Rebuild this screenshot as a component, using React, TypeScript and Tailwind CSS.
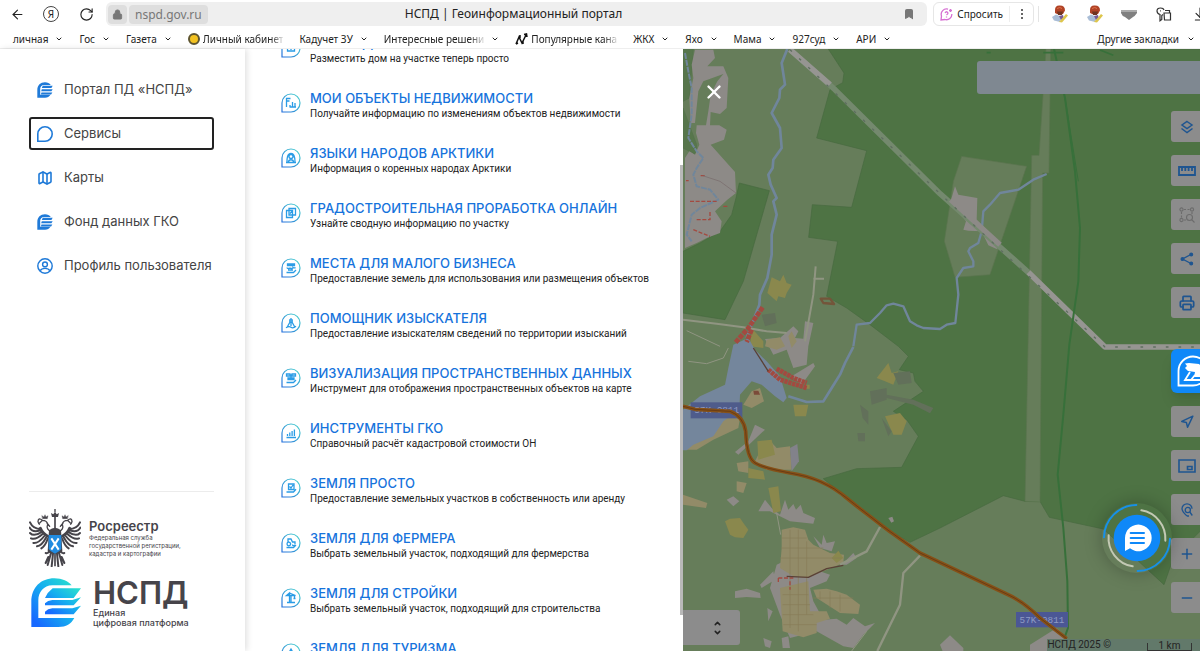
import React from 'react';
import { ArrowLeft, ArrowDownToLine, Bookmark, ChevronDown, ChevronUp, Lock, Map, Minus, Navigation, Plus, Printer, RotateCw, X } from 'lucide-react';

const DROP = 'M1 19V10A9 9 0 1 1 10 19Z';

const folders = [
    { label: 'личная' },
    { label: 'Гос' },
    { label: 'Газета' },
    { label: 'Личный кабинет', icon: 'coin', fade: true },
    { label: 'Кадучет ЗУ' },
    { label: 'Интересные решени', fade: true },
    { label: 'Популярные кана', icon: 'zigzag', fade: true },
    { label: 'ЖКХ' },
    { label: 'Яхо' },
    { label: 'Мама' },
    { label: '927суд' },
    { label: 'АРИ' },
];

const services = [
    { title: 'ЖИЛЬЁ ДЛЯ РОССИЯН', text: 'Разместить дом на участке теперь просто', icon: 'M6.500 7h7v6h-7zM8 10h4M10 8v4' },
    { title: 'МОИ ОБЪЕКТЫ НЕДВИЖИМОСТИ', text: 'Получайте информацию по изменениям объектов недвижимости', icon: 'M5.500 14V5.500h4M5.500 8h3M9 14v-2M11.500 14v-5M14 14v-4M8.500 14H15' },
    { title: 'ЯЗЫКИ НАРОДОВ АРКТИКИ', text: 'Информация о коренных народах Арктики', icon: 'M6 14c0-3 0-8.500 4-8.500s4 5.500 4 8.500M5 14.500h10M8 8.500a2 2 0 1 0 4 0a2 2 0 1 0-4 0M7.500 14c0-3 5-3 5 0' },
    { title: 'ГРАДОСТРОИТЕЛЬНАЯ ПРОРАБОТКА ОНЛАЙН', text: 'Узнайте сводную информацию по участку', icon: 'M5.500 7.500h6v7h-6zM8 5.500h6.500v6.500H8zM9 10.500l3-3' },
    { title: 'МЕСТА ДЛЯ МАЛОГО БИЗНЕСА', text: 'Предоставление земель для использования или размещения объектов', icon: 'M6.500 6h7v1.500h-7zM6 9.500a1.500 1 0 0 0 3 0a1.500 1 0 0 0 3 0a1.500 1 0 0 0 2.500 0M7 12h5M5.500 14.500h7l2.500-2.500' },
    { title: 'ПОМОЩНИК ИЗЫСКАТЕЛЯ', text: 'Предоставление изыскателям сведений по территории изысканий', icon: 'M10 5v2M8.800 7h2.400v2H8.800zM9 9l-2.500 4.500M10 9v4M11 9l2.500 4.500M5 14.800q3-2 5-.5t5-1' },
    { title: 'ВИЗУАЛИЗАЦИЯ ПРОСТРАНСТВЕННЫХ ДАННЫХ', text: 'Инструмент для отображения пространственных объектов на карте', icon: 'M5.500 6h3.500v2h-3.500zM11 6h3.500v2H11zM7 10h6v1.500H7zM9 7h2M10 7v3M5.500 14.500h7l2.500-2.500' },
    { title: 'ИНСТРУМЕНТЫ ГКО', text: 'Справочный расчёт кадастровой стоимости ОН', icon: 'M6.500 13v-2M8.800 13V9.500M11.100 13V8M13.400 13V6.500M5.500 14.500H15' },
    { title: 'ЗЕМЛЯ ПРОСТО', text: 'Предоставление земельных участков в собственность или аренду', icon: 'M7.500 6h5.500v5.500H7.500zM8.500 8.500l1.500 1.500l2-3M5.500 14h7l2.500-2.800' },
    { title: 'ЗЕМЛЯ ДЛЯ ФЕРМЕРА', text: 'Выбрать земельный участок, подходящий для фермерства', icon: 'M7 9V6h3l1.500 3h2.500v2M6 11a1.800 1.800 0 1 0 3.600 0a1.800 1.800 0 1 0-3.600 0M11.500 11.500a1.200 1.200 0 1 0 2.400 0M5.500 14.500h7l2.500-2.500' },
    { title: 'ЗЕМЛЯ ДЛЯ СТРОЙКИ', text: 'Выбрать земельный участок, подходящий для строительства', icon: 'M8.500 14V5l-3 2.500h9L8.500 5M10 7.500V14M13.500 8v2M12.500 10.500h2M6 14.500h8' },
    { title: 'ЗЕМЛЯ ДЛЯ ТУРИЗМА', text: 'Выбрать земельный участок, подходящий для туризма', icon: 'M5.500 14l4.500-8l4.500 8z' },
];

const NspdIcon = () => (
    <svg viewBox="0 0 100 100" className="h-4 w-4" fill="#1f7ad8">
        <path d="M2 98V50C2 20 22 2 50 2C66 2 78 8 86 18H44C28 18 20 30 20 42V80H84C76 92 66 98 50 98Z" />
        <path d="M36 24H98L90 37H30ZM30 46H98L90 58H26ZM28 66H96L88 78H24Z" />
    </svg>
);

const navItems = [
    { label: 'Портал ПД «НСПД»', icon: <NspdIcon /> },
    { label: 'Сервисы', active: true, icon: <svg viewBox="0 0 20 20" className="h-4 w-4" fill="none" stroke="#1f7ad8" strokeWidth="2"><path d={DROP} /></svg> },
    { label: 'Карты', icon: <Map className="h-4 w-4 text-[#1f7ad8]" strokeWidth={2.4} /> },
    { label: 'Фонд данных ГКО', icon: <NspdIcon /> },
    {
        label: 'Профиль пользователя',
        icon: (
            <svg viewBox="0 0 20 20" className="h-4 w-4" fill="none" stroke="#1f7ad8" strokeWidth="1.800">
                <circle cx="10" cy="10" r="9" />
                <circle cx="10" cy="8" r="3" />
                <path d="M4 16c2-4 10-4 12 0" />
            </svg>
        ),
    },
];

const ServiceIcon = ({ path }: { path: string }) => (
    <svg viewBox="0 0 20 20" className="mt-[3px] h-5 w-5 shrink-0" fill="none" stroke="url(#drop)">
        <path d={DROP} strokeWidth="1.200" />
        <path d={path} strokeWidth="1.300" stroke="#2a9ce6" />
    </svg>
);

const Gnome = () => (
    <svg viewBox="0 0 18 18" className="h-[18px] w-[18px]">
        <path d="M4 5q0-5 5-4.500q5 0 5 5l-2 3.500H6l-2-1z" fill="#b04326" />
        <path d="M6 3.500q3-2 5 0" stroke="#e3714a" fill="none" />
        <path d="M6 6.500h6l-1 3.500H7z" fill="#6e3420" />
        <path d="M1 12l4-2.500l6 2.500l-2 5l-6-1.500z" fill="#a9bdd6" />
        <path d="M8 11l4-1l1 4l-3 1z" fill="#775a96" />
        <path d="M8 17l7-8l2 1.500l-6 7z" fill="#ddc54c" />
    </svg>
);

const BrowserBar = () => (
    <header className="shrink-0 bg-white font-['Noto_Sans',sans-serif] text-[#222]">
        <div className="flex h-7 items-center">
            <button aria-label="Назад" className="ml-[10px]"><ArrowLeft className="h-[15px] w-[15px]" strokeWidth={1.8} /></button>
            <button aria-label="Яндекс" className="ml-[18px] flex h-4 w-4 items-center justify-center rounded-full border border-[#444] text-[10px] leading-none">Я</button>
            <button aria-label="Обновить" className="ml-5"><RotateCw className="h-[15px] w-[15px]" strokeWidth={1.8} /></button>
            <div className="ml-3 flex h-6 flex-1 items-center rounded-md bg-[#efefef] px-[2px]">
                <button aria-label="Защищено" className="flex h-[19px] w-[19px] items-center justify-center rounded bg-[#dedede] text-[#777]"><Lock className="h-[11px] w-[11px] fill-[#777]" /></button>
                <span className="ml-[2px] rounded bg-[#dedede] px-[6px] text-[12px] leading-[19px] text-[#777]">nspd.gov.ru</span>
                <span className="flex-1 truncate pr-[84px] text-center text-[12px] leading-5">НСПД | Геоинформационный портал</span>
                <button aria-label="Добавить в закладки" className="mr-[10px]"><Bookmark className="h-3 w-3 fill-[#777] text-[#777]" /></button>
            </div>
            <div className="ml-[6px] flex h-6 items-center rounded-md border border-[#e6e6e6] pl-[6px] text-[10px]">
                <button className="flex items-center gap-1">
                    <svg viewBox="0 0 13 13" className="h-[13px] w-[13px]" fill="none" stroke="#d66fd2" strokeWidth="1.300">
                        <path d="M8 1.200A5.300 5.300 0 0 0 1.500 8L1 12l4-.5A5.300 5.300 0 0 0 11.800 6" />
                        <path d="M5 5q1.500-2.500 3 0q0 1-1.500 2M6.500 8.500v1M10.500 1v3M9 2.500h3" />
                    </svg>
                    Спросить
                </button>
                <button aria-label="Меню" className="ml-[6px] flex h-4 w-6 items-center justify-center border-l border-[#eee]">
                    <svg viewBox="0 0 4 14" className="h-[14px] w-1" fill="#333"><circle cx="2" cy="3" r="1" /><circle cx="2" cy="7" r="1" /><circle cx="2" cy="11" r="1" /></svg>
                </button>
            </div>
            <span className="ml-1 h-4 w-px bg-[#e4e4e4]" />
            <button aria-label="Расширение" className="ml-3"><Gnome /></button>
            <button aria-label="Расширение 2" className="ml-[17px]"><Gnome /></button>
            <button aria-label="Карман" className="ml-[17px]">
                <svg viewBox="0 0 16 12" className="h-3 w-4"><path d="M0 2h16v3q-2 3-4 4l-4 3l-4-3q-3-1-4-4z" fill="#808080" /><path d="M0 2h16v2H0z" fill="#aaa" /></svg>
            </button>
            <button aria-label="Пароли" className="ml-[19px]">
                <svg viewBox="0 0 16 15" className="h-[15px] w-4" fill="none" stroke="#333" strokeWidth="1.200">
                    <path d="M7 7.500L5.800 8.500V12.500L4 13.800V7.500Q1 6.500 1 4Q1 1 4.500 1Q7.500 1 8 3" />
                    <path d="M8 6H14.500V13H8.500ZM9 3.500H13.500V6M4.200 3.800h.8" />
                </svg>
            </button>
            <button aria-label="Загрузки" className="-mr-2 ml-5"><ArrowDownToLine className="h-4 w-4" strokeWidth={1.6} /></button>
        </div>
        <nav className="flex h-[21px] items-center border-b border-[#eee] pl-[13px] pr-[5px] pt-[2px] text-[10px] leading-[14px]">
            <ul className="flex flex-1 items-center gap-4">
                {folders.map((f) => (
                    <li key={f.label}>
                        <a href="#" className="flex items-center">
                            {f.icon === 'coin' && <span className="mr-[3px] h-3 w-3 rounded-full border-2 border-[#5e5530] bg-[#f3c221]" />}
                            {f.icon === 'zigzag' && (
                                <svg viewBox="0 0 13 13" className="mr-[3px] h-[13px] w-[13px]" fill="none" stroke="#111" strokeWidth="1.500">
                                    <path d="M1 11l3-7l3 6l4-8M1 11l2-1M5 2v3M9 1.500l2.500-.5l.5 3M8 8v3" />
                                </svg>
                            )}
                            <span className={`whitespace-nowrap ${f.fade ? '[mask-image:linear-gradient(to_right,black_85%,rgba(0,0,0,0.150))]' : ''}`}>{f.label}</span>
                            {f.icon ? null : <ChevronDown className="ml-[7px] h-2 w-2" strokeWidth={3} />}
                        </a>
                    </li>
                ))}
            </ul>
            <a href="#" className="flex items-center whitespace-nowrap">Другие закладки<ChevronDown className="ml-2 h-2 w-2" strokeWidth={3} /></a>
        </nav>
    </header>
);

const Emblem = () => (
    <svg viewBox="0 0 156 174" className="h-[58px] w-[52px] shrink-0">
        <defs>
            <g id="wing" fill="none" stroke="#46444a" strokeLinecap="round">
                <path d="M60 84Q40 74 34 58" strokeWidth="9" />
                <path d="M36 60Q12 60 3 40M34 64Q10 72 2 56M36 70Q14 84 3 72M40 76Q20 94 6 88M46 81Q28 104 13 102M51 86Q38 110 24 112M56 90Q48 112 37 118" strokeWidth="6" />
                <path d="M68 68Q50 62 56 46Q54 34 40 34L32 42M40 34Q28 24 27 38Q29 46 31 46M54 42L62 52" strokeWidth="4" />
                <path d="M41 29h14l2-9l-6 4l-3-7l-3 7l-6-4z" fill="#46444a" strokeWidth="1" />
                <path d="M62 128Q56 134 50 132M66 132L56 168M72 134L68 172M58 144L50 162" strokeWidth="6" />
            </g>
        </defs>
        <use href="#wing" />
        <use href="#wing" transform="translate(156 0) scale(-1 1)" />
        <path d="M69 24h18l3-12l-7 4l-5-8l-5 8l-7-4zM76 0h4v10h-4z" fill="#46444a" />
        <path d="M78 24V172" stroke="#46444a" strokeWidth="5" />
        <path d="M60 64Q78 48 96 64L100 128Q78 142 56 128Z" fill="#46444a" />
        <path d="M59 78H97V120Q92 128 78 134Q64 128 59 120Z" fill="#218be0" />
        <path d="M67 88L89 122M89 88L67 122" stroke="#fff" strokeWidth="6" />
    </svg>
);

const Sidebar = () => (
    <aside className="z-10 flex w-[245px] shrink-0 flex-col bg-white pb-[23px] pl-[29px] pr-[31px] pt-6 shadow-[2px_0_6px_rgba(0,0,0,0.120)]">
        <nav>
            <ul className="flex flex-col gap-[11px]">
                {navItems.map((item) => (
                    <li key={item.label}>
                        <a href="#" className={`flex h-[33px] items-center gap-[11px] whitespace-nowrap rounded-[3px] border-2 pl-[6px] text-[13px] text-[#444] ${item.active ? 'border-[#222]' : 'border-transparent'}`}>
                            {item.icon}
                            {item.label}
                        </a>
                    </li>
                ))}
            </ul>
        </nav>
        <footer className="mt-auto border-t border-[#ececec] pt-[17px] text-[#46444a]">
            <div className="flex items-center gap-2">
                <Emblem />
                <div>
                    <p className="text-[13px] font-semibold leading-4">Росреестр</p>
                    <p className="whitespace-nowrap text-[6px] leading-[8px]">Федеральная служба<br />государственной регистрации,<br />кадастра и картографии</p>
                </div>
            </div>
            <div className="mt-[10px] flex items-center gap-3">
                <svg viewBox="0 0 150 150" className="ml-[2px] h-[50px] w-[50px] shrink-0">
                    <defs>
                        <linearGradient id="logo" x1="0" y1="1" x2="1" y2="0">
                            <stop offset="0.100" stopColor="#1769ff" />
                            <stop offset="0.550" stopColor="#16b1ee" />
                            <stop offset="1" stopColor="#2be3cb" />
                        </linearGradient>
                    </defs>
                    <g fill="url(#logo)">
                        <path d="M1 147V72C1 28 30 1 70 1C94 1 112 10 122 22H64C38 22 22 44 22 66V120H130C120 138 106 147 82 147Z" />
                        <path d="M65 31H150L128 60H42Q50 42 65 31ZM42 76Q50 67 64 66H124L150 58L128 82H42ZM42 101Q50 92 64 91H124L150 83L128 109H42Z" />
                    </g>
                </svg>
                <div>
                    <p className="text-[31px] font-semibold leading-[31px]">НСПД</p>
                    <p className="whitespace-nowrap text-[9px] font-medium leading-[10px]">Единая<br />цифровая платформа</p>
                </div>
            </div>
        </footer>
    </aside>
);

const ServicesPanel = () => (
    <section className="flex w-[438px] shrink-0 overflow-hidden bg-white">
        <ul className="-mt-[14px] flex-1 pl-9">
            {services.map((s) => (
                <li key={s.title} className="h-[55px]">
                    <a href="#" className="flex gap-[9px]">
                        <ServiceIcon path={s.icon} />
                        <div className="whitespace-nowrap">
                            <h3 className="text-[13px] font-medium leading-[17px] text-[#1673dc]">{s.title}</h3>
                            <p className="font-['Roboto',sans-serif] text-[10px] leading-[13px] text-[#222]">{s.text}</p>
                        </div>
                    </a>
                </li>
            ))}
        </ul>
        <div className="mt-[116px] h-[450px] w-[3px] bg-[#b9b9b9]" />
    </section>
);

const MapCanvas = () => (
    <svg viewBox="9 3 1551 1806" preserveAspectRatio="xMinYMin slice" className="absolute inset-0 h-full w-full bg-[#667d5a]" strokeLinejoin="round">
        <rect x="9" y="3" width="2600" height="2600" fill="#667d5a" />
        {/* forest */}
        <g fill="#4e7344" stroke="#476a3f" strokeWidth="2">
            <path d="M445 3L492 75L488 104L450 125L410 270L560 308L515 478L397 470L386 568L473 580L440 745L500 780L570 830L655 895L685 925L658 965L700 975L705 1000L730 1030L640 1090L680 1115L715 1165L665 1258L530 1262L430 1292L470 1325L600 1432L690 1483L780 1440L970 1343L1035 1360L1080 1360L1108 1408L1270 1443L1452 1610L1480 1530L1570 1440V3Z" />
            <path d="M178 405L268 428L190 700L135 815L9 795V610L60 585L120 550L155 500L168 450Z" />
            <path d="M9 3H40L28 150L9 160ZM9 180L50 290L48 320L9 300Z" opacity=".6" />
        </g>
        {/* clearings */}
        <g fill="#667d5a" stroke="#5a744f" strokeWidth="2">
            <path d="M845 325L1040 355L930 680L825 688L793 580L820 400Z" />
            <path d="M1098 3H1112L1107 375H1088L1080 1362L1035 1360L1055 322H1077Z" />
        </g>
        {/* villages */}
        <g fill="#8d8a87">
            <path d="M45 5H100L105 30L82 55L130 55L145 90L140 180L120 198L92 192L90 232H118L140 245L132 275L92 290L165 372L168 435L142 455L105 490L125 520L120 555L80 570L50 585L15 600V330L28 310L45 320L58 290L48 255L50 232H78L85 190L92 140L112 100L130 78L70 100L55 130L45 225H32L28 150L40 90L35 50Z" />
            <path d="M825 415L835 440L892 450L890 515L960 585L950 603L925 592L905 550L865 548L850 545L858 520L812 460Z" />
            <path d="M255 873L300 870L340 835L355 850L345 870L370 872L375 820L400 825L385 895L380 950L340 960L320 905L280 920Z" />
            <path d="M225 1130L255 1145L175 1220L165 1212L205 1180ZM335 985L400 945L405 955L365 1010ZM235 1390L255 1355L275 1380L300 1400L315 1355L325 1385L340 1368L348 1385L362 1370L370 1395L405 1410L400 1427L330 1420L270 1390ZM140 1355L160 1345L178 1360L160 1375ZM165 1630L200 1622L240 1635L242 1650L200 1647L165 1650ZM400 1465L425 1490L430 1460L440 1485L465 1480L455 1510L420 1500ZM485 1550L520 1515L530 1530L500 1550ZM625 1410l12-4l5 14l-8 4Z" />
            <path d="M780 1790L810 1762L850 1800V1815H790ZM1050 1790L1130 1740L1160 1770V1815H1050Z" />
            <path d="M290 1550L320 1535L450 1580L440 1600L390 1620L400 1660L430 1715L470 1712L500 1730L520 1710L555 1735L585 1725L550 1760L520 1800L490 1795L410 1750L330 1770L300 1700L270 1620ZM250 1770L275 1780L270 1800L255 1795ZM305 1770L325 1765L330 1800H308ZM262 1680L278 1690L265 1720ZM240 1610L280 1570L285 1595L245 1620Z" />
        </g>
        {/* farmland */}
        <g fill="#928b68">
            <path d="M305 1445L340 1438L375 1445L385 1475L400 1490L450 1515L492 1520L490 1545L380 1590L340 1585L300 1560L305 1500Z" />
            <path d="M300 1620L385 1600L390 1690L440 1690L450 1712L410 1725V1755L370 1768L308 1750ZM400 1625L440 1622L470 1630L500 1640L540 1670L535 1698L480 1695L410 1650Z" />
            <path d="M260 875L300 868L315 895L290 905L255 895ZM335 850L350 880L335 900L325 865ZM240 1020L252 1060L215 1080L190 1070L215 1030ZM270 1178L290 1200L330 1195L335 1265L260 1265L225 1240L240 1210ZM170 1245L205 1240V1275L175 1270ZM170 1300L200 1305L190 1335L170 1330ZM9 1340L82 1365L78 1380L9 1370ZM20 1195L80 1155L150 1100L180 1110L175 1140L100 1175L50 1205H20Z" />
        </g>
        <path d="M330 1200L352 1188L357 1240L335 1270Z" fill="#82828a" />
        <g fill="#8a884d">
            <path d="M275 688L300 700L310 680L320 705L335 710L320 735L315 750L295 745L290 760L262 735ZM215 840L250 880V900L210 895ZM590 990L625 945L635 975L655 970L640 1010L615 1000ZM615 1105L660 1095L680 1120L665 1160L640 1160ZM135 1420L150 1412L180 1410L190 1425L205 1445L190 1470L165 1468L150 1460ZM232 1180L275 1175L285 1220L235 1235ZM265 1320L295 1315L303 1390L280 1395ZM340 1070L385 1070L378 1105H345ZM205 1260L250 1270L255 1295L205 1290ZM455 1530L475 1508L490 1530L470 1545ZM375 1010h14v12h-14Z" />
        </g>
        <path d="M305 1470H380M303 1500H430M300 1530H485M330 1445V1740M355 1445V1750M380 1480V1700M308 1640H385M308 1670H390M308 1700H400M310 1730H410M420 1630V1655M450 1630V1680M480 1640V1690M400 1650H520" stroke="#877c58" strokeWidth="2" fill="none" />
        {/* burnt patches */}
        <g fill="#62705a">
            <path d="M570 1030L620 1020V1055L575 1070ZM540 1070L565 1090V1130L548 1110ZM640 975L690 970L695 1005L655 1010ZM605 1110L635 1150L625 1165ZM532 1155H555V1180H535ZM245 800L285 795L290 825L255 835ZM620 1040L700 1055L760 1080L750 1096L700 1070L620 1050Z" />
        </g>
        {/* water */}
        <path d="M160 890L205 870L225 905L260 940L300 985L320 1050L310 1063L285 1045L245 1010L215 1000L180 1040L178 1085L130 1120L100 1165L40 1190L20 1207H9V1085L60 1045L135 1010L145 960Z" fill="#74869c" />
        <g fill="none" stroke="#70869b" strokeWidth="8">
            <path d="M322 3L305 45L315 110L300 125L298 150L275 195L300 240L305 300L280 335L278 360L265 380L272 410L290 450L280 460L290 500L275 560V620L262 690L240 740L238 770L200 870" />
            <path d="M520 895L530 830L570 825L600 795L620 772L640 767L670 775L690 820L710 832L730 840L780 843L800 830L826 825L835 740L830 690L850 660L880 655L880 640L865 610L870 600L895 585L905 550L910 490L930 470L960 435L1015 425L1060 395L1100 378" strokeWidth="7" />
            <path d="M520 897L495 945L480 980L455 1020L430 1060L380 1062L325 1045" />
            <path d="M15 15L25 70L35 120L35 200L25 270L50 310L70 330L50 360L40 380L50 415L90 425L115 455L60 480L35 500L20 560L35 580" strokeWidth="6" strokeDasharray="18 3" />
        </g>
        {/* power line corridor */}
        <g fill="none">
            <path d="M330 5L465 125L780 437L1045 673" stroke="#74896e" strokeWidth="17" />
            <path d="M330 5L450 110M1045 673L1275 897H1570" stroke="#969592" strokeWidth="17" />
            <path d="M812 455L960 590" stroke="#8d8a87" strokeWidth="16" />
            <path d="M330 5L780 437L1275 897H1570" stroke="#5f6f60" strokeWidth="4" strokeDasharray="8 30" />
        </g>
        {/* drains */}
        <g fill="none" stroke="#37703a">
            <path d="M1122 3L1155 150L1185 370L1200 540L1195 700L1168 890L1150 1100L1133 1280L1150 1440L1162 1600L1164 1740L1155 1765" strokeWidth="6" />
            <path d="M1155 150L1195 400" strokeWidth="3" />
            <path d="M1090 14H1150M1260 6L1300 22M920 14h12" strokeWidth="5" />
        </g>
        {/* minor roads */}
        <g fill="none" stroke="#909582" strokeWidth="6">
            <path d="M9 815L110 827L190 838L260 850L320 855M407 655L400 740L375 880M400 692H432" />
            <path d="M600 1437L560 1510L480 1550M720 1523L670 1575L660 1670L592 1809" strokeWidth="7" />
            <path d="M25 940L80 947L130 930L145 900M20 848L120 895M290 1395L302 1460M560 1750L515 1809" strokeWidth="3" />
            <path d="M1160 1800L1400 1790L1480 1809" stroke="#8c8870" strokeWidth="3" />
        </g>
        {/* built-up */}
        <g fill="none" stroke="#a34a40">
            <path d="M248 778L205 840L165 885M215 845L200 882" strokeWidth="14" strokeDasharray="14 3" />
            <path d="M265 965L300 995L380 1020M290 962L340 990L380 1005" strokeWidth="14" strokeDasharray="10 2" />
            <path d="M30 460H115M50 515H90V490M40 545L90 565M130 475H145M62 383h12M18 398h8M295 1590V1605M295 1590H340M330 1600V1625" strokeWidth="4" strokeDasharray="12 5" />
            <path d="M68 383L120 400L168 435" stroke="#77696a" strokeWidth="2" />
            <path d="M220 900L265 970M320 1585L385 1588L440 1562L490 1552" stroke="#5a4136" strokeWidth="4" />
            <path d="M422 752H450L462 768L430 765Z" stroke="#73553a" strokeWidth="7" />
        </g>
        <path d="M220 1028h15l5 12h-18z" fill="#7b4b39" />
        {/* highway */}
        <rect x="32" y="1063" width="155" height="48" fill="#4f5c8b" />
        <rect x="1008" y="1692" width="156" height="46" fill="#4b5795" />
        <g fontSize="28" fill="#8f9bc4" fontFamily="'Liberation Mono', monospace" textAnchor="middle">
            <text x="110" y="1096">57K-0811</text>
            <text x="1086" y="1725">57K-0811</text>
        </g>
        <g fill="none">
            <path d="M9 1075L45 1084L150 1090Q190 1105 197 1150Q200 1230 225 1245T330 1275Q430 1290 500 1350Q610 1440 720 1515L980 1638Q1030 1660 1080 1710L1160 1772" stroke="#865117" strokeWidth="11" />
            <path d="M9 1075L45 1084L150 1090Q190 1105 197 1150Q200 1230 225 1245T330 1275Q430 1290 500 1350Q610 1440 720 1515L980 1638Q1030 1660 1080 1710L1160 1772" stroke="#6a3c14" strokeWidth="3" />
        </g>
    </svg>
);

const tools = [
    {
        label: 'Слои',
        icon: (
            <svg viewBox="0 0 14 14" className="h-[14px] w-[14px]" fill="none" stroke="currentColor" strokeWidth="1.500"><path d="M7 1.500L12 5L7 8.500L2 5ZM1.500 8.500L7 12.500L12.500 8.500" /></svg>
        ),
    },
    {
        label: 'Измерения',
        icon: (
            <svg viewBox="0 0 18 12" className="h-3 w-[18px]" fill="none" stroke="currentColor" strokeWidth="1.800"><path d="M1 2h16v8H1zM4 2v4M7.300 2v4M10.600 2v4M14 2v4" /></svg>
        ),
    },
    {
        label: 'Выделение',
        muted: true,
        icon: (
            <svg viewBox="0 0 16 16" className="h-4 w-4" fill="none" stroke="currentColor" strokeWidth="1.100">
                <circle cx="2.500" cy="2.500" r="1.600" /><circle cx="13" cy="2.500" r="1.600" /><circle cx="2.500" cy="13" r="1.600" />
                <path d="M5 2.500h6M2.500 5v6M13 5v2M5 13h2" strokeDasharray="2 1.500" />
                <circle cx="10.500" cy="10.500" r="3" /><path d="M13 13l2.500 2.500" />
            </svg>
        ),
    },
    {
        label: 'Поделиться',
        icon: (
            <svg viewBox="0 0 14 14" className="h-[14px] w-[14px]" fill="currentColor" stroke="currentColor" strokeWidth="1.400">
                <path d="M11 2.500L2.500 7L11 11.500" fill="none" /><circle cx="11.200" cy="2.500" r="1.300" /><circle cx="2.500" cy="7" r="1.300" /><circle cx="11.200" cy="11.500" r="1.300" />
            </svg>
        ),
    },
    { label: 'Печать', icon: <Printer className="h-4 w-4" strokeWidth={2.6} /> },
];

const navTools = [
    { label: 'Моё местоположение', icon: <Navigation className="h-[14px] w-[14px]" strokeWidth={2.6} /> },
    {
        label: 'Обзорная карта',
        icon: (
            <svg viewBox="0 0 18 14" className="h-[14px] w-[18px]" fill="none" stroke="currentColor" strokeWidth="1.600"><path d="M1 1h16v12H1zM9.500 7.500h4.500v3H9.500z" /></svg>
        ),
    },
    {
        label: 'Поиск по координатам',
        icon: (
            <svg viewBox="0 0 14 14" className="h-[14px] w-[14px]" fill="none" stroke="currentColor" strokeWidth="1.300">
                <path d="M7 13Q2 8.500 2 5.800A5 5 0 0 1 12 5.800" /><circle cx="7.800" cy="7" r="2.600" /><path d="M9.800 9l2.500 3.500M7 13h2" />
            </svg>
        ),
    },
    { label: 'Приблизить', icon: <Plus className="h-4 w-4" strokeWidth={2.2} /> },
    { label: 'Отдалить', icon: <Minus className="h-4 w-4" strokeWidth={2.2} /> },
];

const ToolButton = ({ label, muted, children }: { label: string; muted?: boolean; children: React.ReactNode }) => (
    <button aria-label={label} className={`flex h-[31px] w-8 items-center justify-center rounded-[3px] bg-[#8c8c8c] ${muted ? 'text-[#6c6c6c]' : 'text-[#1f5590]'}`}>
        {children}
    </button>
);

const MapView = () => (
    <main className="relative flex-1 overflow-hidden">
        <MapCanvas />
        <button aria-label="Закрыть" className="absolute left-5 top-8 text-white"><X className="h-[22px] w-[22px]" strokeWidth={2.6} /></button>
        <input aria-label="Поиск" type="search" className="absolute right-0 top-3 h-[33px] w-[223px] rounded-l-[3px] bg-[#7f8891]" />

        <div className="absolute -right-[3px] top-[62px] flex w-8 flex-col items-start gap-[13px]">
            {tools.map((t) => <ToolButton key={t.label} label={t.label} muted={t.muted}>{t.icon}</ToolButton>)}
            <button aria-label="Помощник" className="mt-[18px] flex h-11 w-11 shrink-0 items-center justify-center rounded-md bg-[#0f88f8] shadow-lg">
                <svg viewBox="0 0 32 32" className="h-8 w-8" fill="none" stroke="#fff" strokeWidth="1.800">
                    <path d="M1.500 30.500V16A14.500 14.500 0 1 1 16 30.500Z" />
                    <path d="M8 8.500L12 8L22 9L27 14V22H17L18 17L11 16L8 13L10 11Z" fill="#fff" stroke="none" />
                    <path d="M13 17L8 25H24M18 20L14 25" />
                </svg>
            </button>
            {navTools.map((t) => <ToolButton key={t.label} label={t.label}>{t.icon}</ToolButton>)}
        </div>

        <button aria-label="Чат поддержки" className="absolute bottom-[78px] right-7 rounded-full shadow-[0_0_18px_rgba(0,0,0,0.250)]">
            <svg viewBox="0 0 210 210" className="h-[70px] w-[70px]" fill="none" strokeLinecap="round">
                <circle cx="105" cy="105" r="70" fill="#0f88f8" />
                <path d="M6 103A99 99 0 0 1 103 6M204 107A99 99 0 0 1 107 204" stroke="#1790e8" strokeWidth="6" />
                <path d="M118 22A86 86 0 0 1 190 113M92 190A86 86 0 0 1 20 97" stroke="#c3c9b4" strokeWidth="6" />
                <path d="M69 144V105A40 40 0 1 1 84 136Z" fill="#fff" />
                <path d="M86 90H126M86 105H126M86 120H126" stroke="#0f88f8" strokeWidth="6" />
            </svg>
        </button>

        <button aria-label="Масштаб" className="absolute bottom-[6px] left-0 flex h-[35px] w-[57px] flex-col items-center justify-center rounded-r-[3px] bg-[#8c8c8c] pl-3 text-[#222]">
            <ChevronUp className="h-[9px] w-[9px]" strokeWidth={4} />
            <ChevronDown className="h-[9px] w-[9px]" strokeWidth={4} />
        </button>
        <div className="absolute bottom-0 right-0 flex h-3 items-end gap-9 bg-[#62796a] pr-2 font-['Roboto',sans-serif] text-[10px] leading-3 text-[#222]">
            <span>НСПД 2025 ©</span>
            <span className="h-2 w-[45px] border-x border-b border-[#333] text-center leading-[5px]">1 km</span>
        </div>
    </main>
);

const App: React.FC = () => (
    <div className="flex h-screen flex-col overflow-hidden bg-white font-['Inter',sans-serif]">
        <svg className="absolute h-0 w-0" aria-hidden="true">
            <linearGradient id="drop" x1="0" y1="1" x2="1" y2="0">
                <stop offset="0" stopColor="#2470dc" />
                <stop offset="1" stopColor="#4fd6cf" />
            </linearGradient>
        </svg>
        <BrowserBar />
        <div className="flex min-h-0 flex-1">
            <Sidebar />
            <ServicesPanel />
            <MapView />
        </div>
    </div>
);

export default App;
